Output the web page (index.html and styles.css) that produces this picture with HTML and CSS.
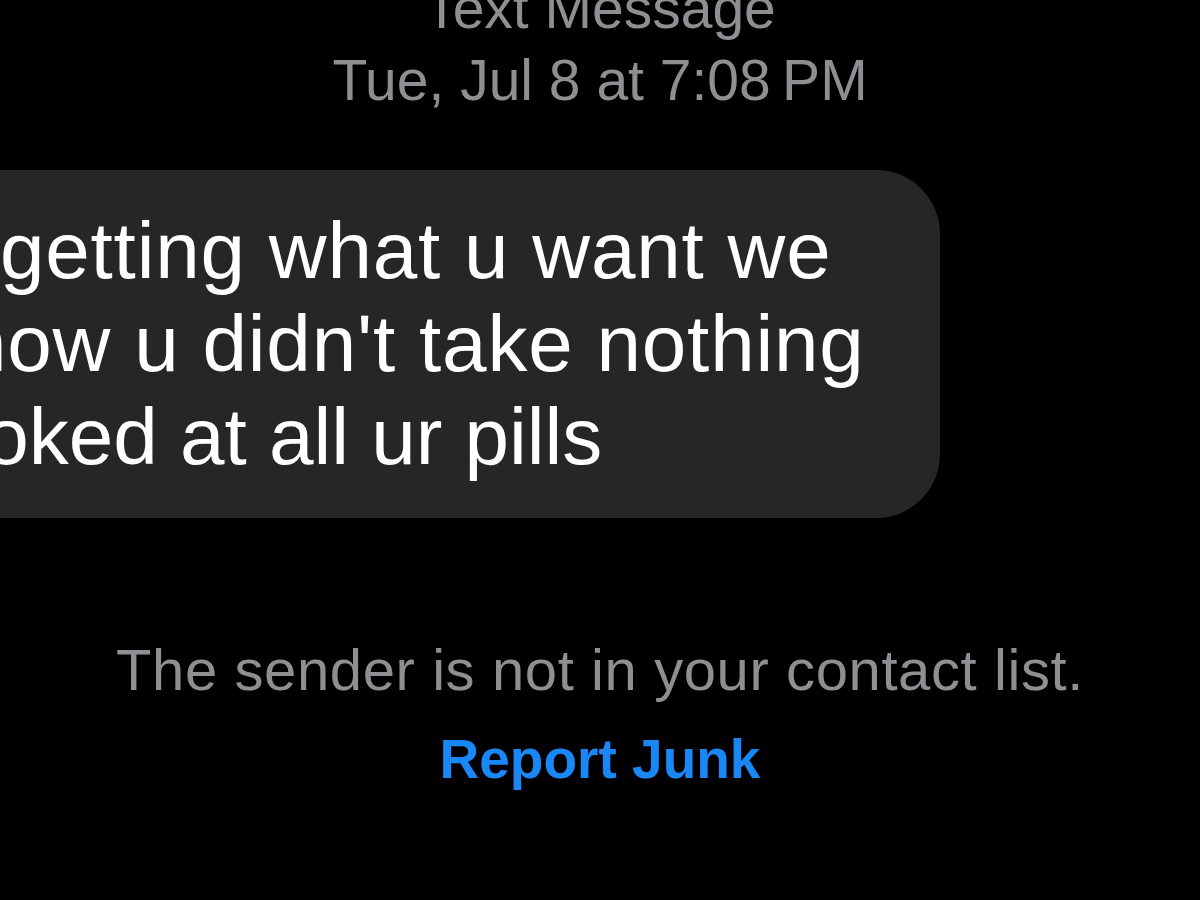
FILE: index.html
```html
<!DOCTYPE html>
<html lang="en">
<head>
 <meta charset="UTF-8">
 <title>Text Message</title>
 <link rel="stylesheet" href="styles.css">
</head>
<body>
<div class="thread">
 <div class="stamp">
  <div>Text Message</div>
  <div>Tue, Jul 8 at 7:08&#8239;PM</div>
 </div>
 <div class="bubble">
  <div class="line">getting what u want we</div>
  <div class="line line2">how u didn't take nothing</div>
  <div class="line line3">looked at all ur pills</div>
 </div>
 <div class="notice">
  <p class="notice_text">The sender is not in your contact list.</p>
  <a class="report" href="#">Report Junk</a>
 </div>
</div>
</body>
</html>
```

FILE: styles.css
```css
html, body{
  margin: 0;
  background: #000;
  height: 100%;
  overflow: hidden;
}
.thread{
  font-family: "Liberation Sans", Arial, sans-serif;
}
.stamp{
  margin-top: -28px;
  text-align: center;
  color: #8e8e93;
  font-size: 57px;
  line-height: 72px;
}
.bubble{
  margin-top: 54px;
  margin-left: -60px;
  width: 1000px;
  box-sizing: border-box;
  padding: 34px 0 35px 60px;
  background: #262628;
  border-radius: 0 64px 64px 0;
  color: #fff;
  font-size: 80px;
  line-height: 93px;
  letter-spacing: 0.8px;
  white-space: nowrap;
}
.line2{
  text-indent: -38px;
}
.line3{
  text-indent: -78px;
  letter-spacing: 0;
}
.notice{
  margin-top: 117px;
  text-align: center;
}
.notice_text{
  margin: 0;
  color: #8e8e93;
  font-size: 58px;
  line-height: 70px;
  letter-spacing: 0.6px;
}
.report{
  display: block;
  margin-top: 19px;
  color: #1a87f7;
  font-size: 55px;
  font-weight: bold;
  line-height: 70px;
  text-decoration: none;
}
```
